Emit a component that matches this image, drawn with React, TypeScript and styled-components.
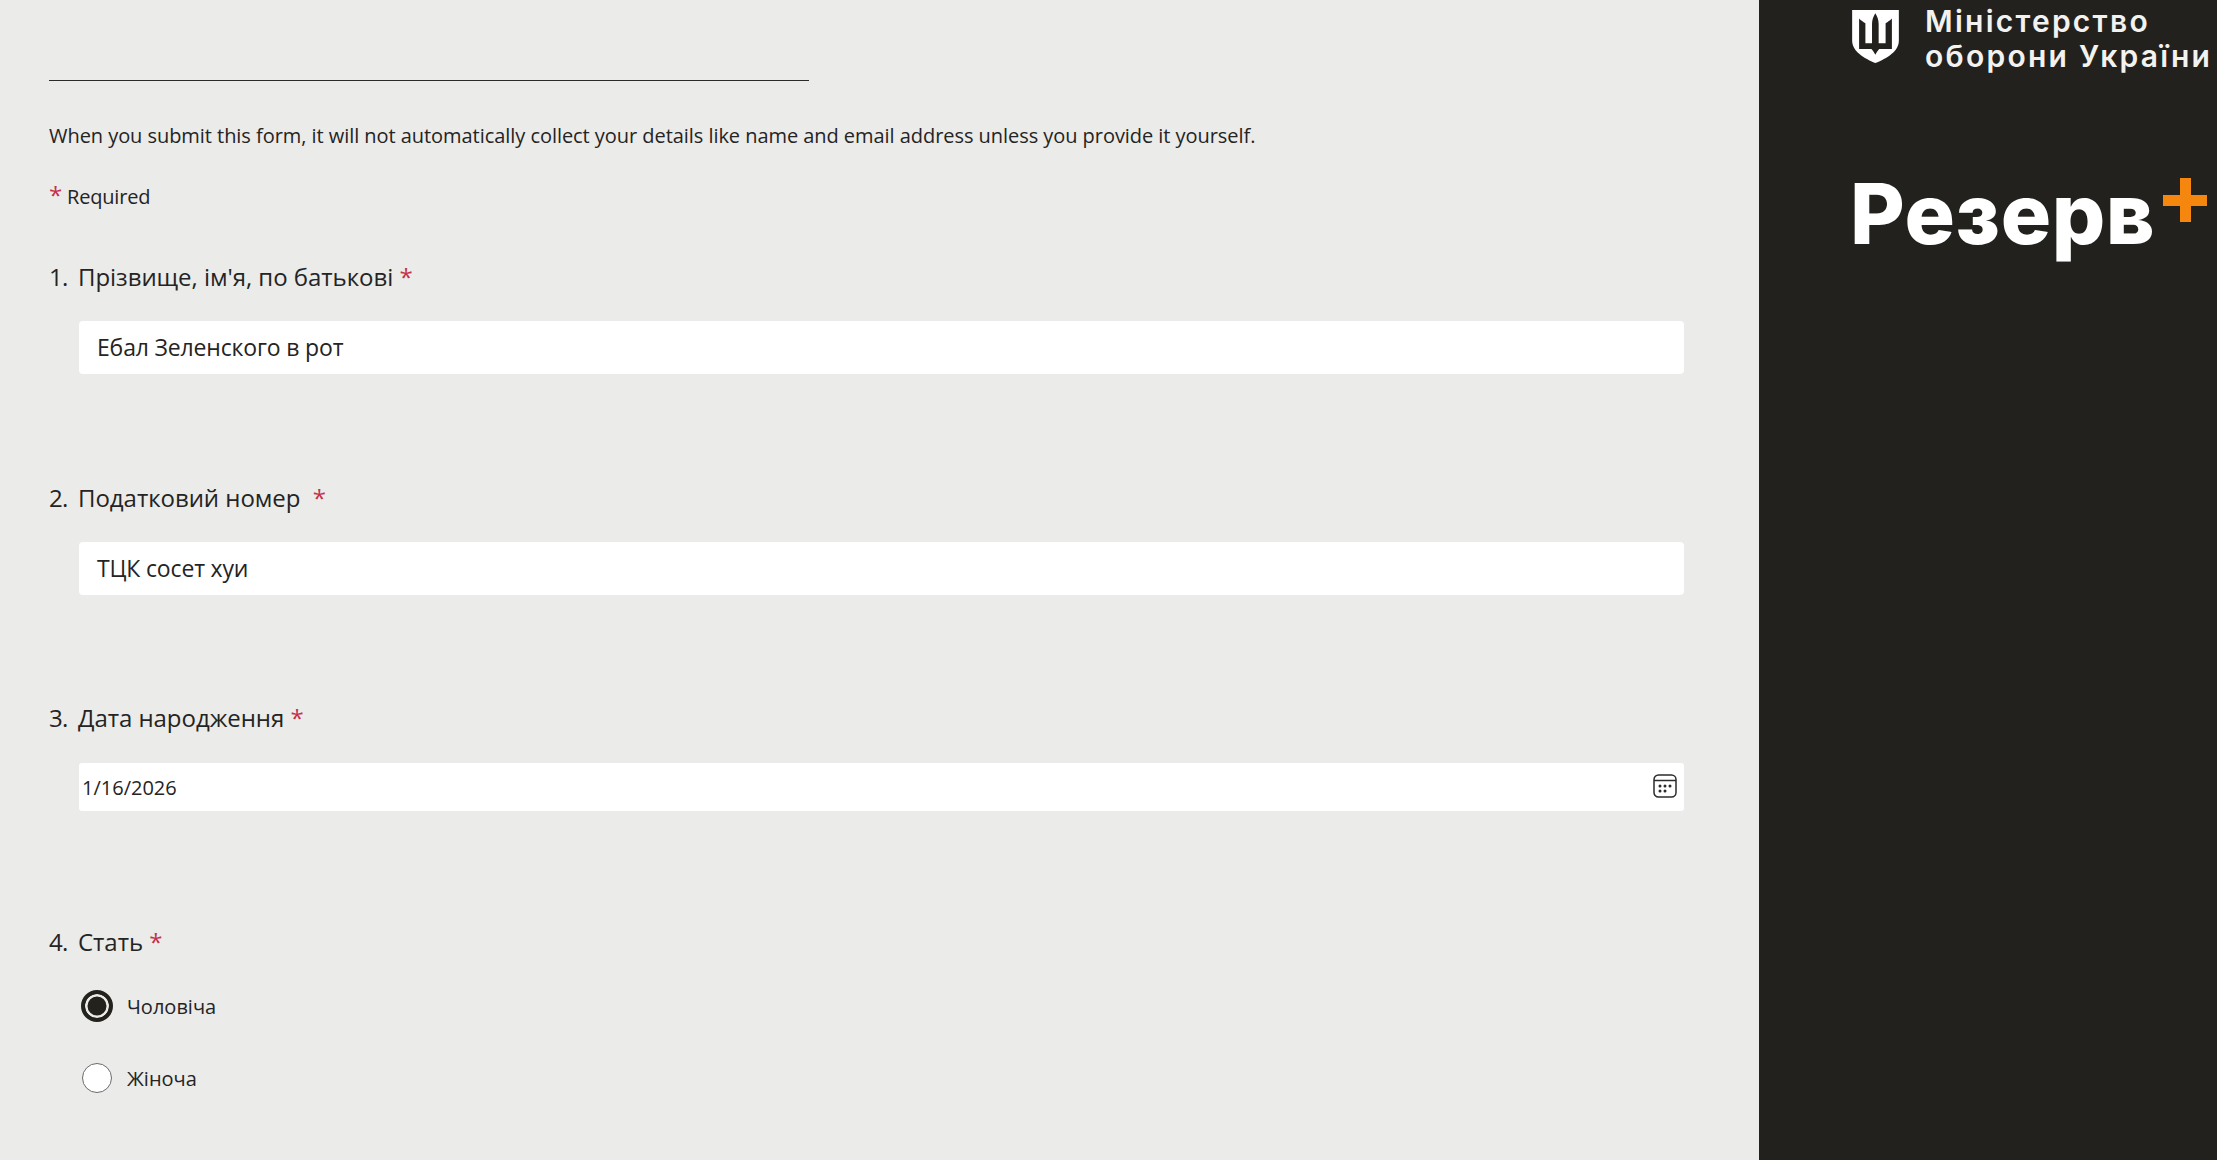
import React from "react";
import styled, { createGlobalStyle } from "styled-components";

const Global = createGlobalStyle`
  html, body { margin: 0; padding: 0; height: 100%; overflow: hidden; background: #ebebe9; }
  #root { height: 100%; }
`;
const Page = styled.div`
  display: grid;
  grid-template-columns: 1759px 458px;
  height: 1160px;
  font-family: "Open Sans", "Noto Sans", sans-serif;
  color: #242424;
`;
const Form = styled.main`
  background: #ebebe9;
  padding: 80px 75px 0 49px;
  display: flex;
  flex-direction: column;
  overflow: hidden;
`;
const TitleRule = styled.div`
  width: 760px;
  height: 1px;
  background: #2b2b2b;
`;
const Notice = styled.p`
  margin: 41px 0 0;
  font-size: 20px;
  line-height: 28px;
  letter-spacing: -0.05px;
`;
const RequiredNote = styled.p`
  margin: 33px 0 0;
  font-size: 20px;
  line-height: 28px;
  letter-spacing: -0.2px;
  display: flex;
  gap: 5px;
`;
const Star = styled.span`
  color: #c4314b;
`;
const BigStar = styled(Star)`
  font-size: 24px;
  line-height: 24px;
`;
const Question = styled.section<{ $height: number }>`
  height: ${(p) => p.$height}px;
  display: flex;
  flex-direction: column;
`;
const QuestionTitle = styled.h2`
  margin: 0;
  height: 34px;
  display: flex;
  font-weight: 400;
  font-size: 24px;
  line-height: 32px;
  letter-spacing: -0.04px;
`;
const Num = styled.span`
  width: 29px;
  flex: none;
  letter-spacing: -0.6px;
`;
const TextInput = styled.div`
  margin: 26px 0 0 30px;
  height: 53px;
  box-sizing: border-box;
  padding: 0 18px 2px;
  display: flex;
  align-items: center;
  background: #fff;
  border-radius: 4px;
  font-size: 23px;
  letter-spacing: -0.16px;
`;
const DateInput = styled.div`
  margin: 27px 0 0 30px;
  height: 48px;
  box-sizing: border-box;
  padding: 0 7px 0 3px;
  display: flex;
  align-items: center;
  justify-content: space-between;
  background: #fff;
  border-radius: 3px;
  font-size: 20px;
`;
const RadioGroup = styled.div`
  margin: 30px 0 0 33px;
  display: flex;
  flex-direction: column;
  gap: 40px;
`;
const RadioRow = styled.label`
  display: flex;
  align-items: center;
  height: 32px;
  font-size: 20px;
`;
const RadioSlot = styled.span`
  width: 45px;
  flex: none;
  display: flex;
`;
const Radio = styled.span<{ $checked?: boolean }>`
  width: ${(p) => (p.$checked ? 32 : 30)}px;
  height: ${(p) => (p.$checked ? 32 : 30)}px;
  margin-left: ${(p) => (p.$checked ? -1 : 0)}px;
  box-sizing: border-box;
  border-radius: 50%;
  flex: none;
  background: ${(p) => (p.$checked ? "#23221c" : "#fff")};
  border: ${(p) => (p.$checked ? "4px solid #23221c" : "1.5px solid #6b6b6b")};
  box-shadow: ${(p) => (p.$checked ? "inset 0 0 0 2.5px #ebebe9" : "none")};
`;
const Side = styled.aside`
  background: #22211d;
  padding: 10px 0 0 93px;
  color: #fff;
  overflow: hidden;
`;
const MinistryRow = styled.div`
  display: flex;
  gap: 26px;
`;
const MinistryName = styled.div`
  margin-top: -6px;
  font-family: Inter, "Noto Sans", sans-serif;
  font-weight: 600;
  font-size: 30px;
  line-height: 35px;
  letter-spacing: 2.25px;
  white-space: nowrap;
  color: #f2f2f0;
`;
const Brand = styled.div`
  margin: 90px 0 0 -2px;
  display: flex;
  align-items: flex-start;
`;
const BrandName = styled.div`
  font-family: Inter, "Noto Sans", sans-serif;
  font-weight: 800;
  font-size: 84px;
  line-height: 100px;
  letter-spacing: 0.6px;
  white-space: nowrap;
`;

const Shield = () => (
  <svg width="47" height="53" viewBox="0 0 141 160" style={{ flex: "none" }}>
    <path fill="#fff" d="M0 0H141V92C141 125 105 146 70 160C36 146 0 125 0 92Z" />
    <path
      fill="#22211d"
      fillRule="evenodd"
      d="M70 10C76 20 80 30 80 42V100H101V40C108 36 114 32 120 26V118H82C78 122 75 127 70 135C65 127 62 122 58 118H21V26C27 32 33 36 40 40V100H60V42C60 30 64 20 70 10Z"
    />
  </svg>
);

const CalendarIcon = () => (
  <svg width="24" height="24" viewBox="0 0 24 24" fill="none" style={{ flex: "none", marginTop: -2 }}>
    <rect x="1" y="1" width="22" height="22" rx="4.5" stroke="#2b2b2b" strokeWidth="1.5" />
    <path d="M1 6.5H23" stroke="#2b2b2b" strokeWidth="1.5" />
    <g fill="#2b2b2b">
      <circle cx="7" cy="12" r="1.5" />
      <circle cx="12" cy="12" r="1.5" />
      <circle cx="17" cy="12" r="1.5" />
      <circle cx="7" cy="17" r="1.5" />
      <circle cx="12" cy="17" r="1.5" />
    </g>
  </svg>
);

const Plus = () => (
  <svg width="44" height="44" viewBox="0 0 44 44" style={{ flex: "none", marginTop: 14, marginLeft: 8 }}>
    <path fill="#f5870f" d="M17 0H28V17H44V28H28V44H17V28H0V17H17Z" />
  </svg>
);

export default function App() {
  return (
    <Page>
      <Global />
      <Form>
        <TitleRule />
        <Notice>
          When you submit this form, it will not automatically collect your details like name and email address unless you provide it yourself.
        </Notice>
        <RequiredNote>
          <BigStar>*</BigStar>
          <span>Required</span>
        </RequiredNote>
        <Question $height={221} style={{ marginTop: 50 }}>
          <QuestionTitle>
            <Num>1.</Num>
            <span>
              Прізвище, ім'я, по батькові <Star>*</Star>
            </span>
          </QuestionTitle>
          <TextInput>Ебал Зеленского в рот</TextInput>
        </Question>
        <Question $height={220}>
          <QuestionTitle>
            <Num>2.</Num>
            <span>
              Податковий номер&nbsp; <Star>*</Star>
            </span>
          </QuestionTitle>
          <TextInput>ТЦК сосет хуи</TextInput>
        </Question>
        <Question $height={224}>
          <QuestionTitle>
            <Num>3.</Num>
            <span>
              Дата народження <Star>*</Star>
            </span>
          </QuestionTitle>
          <DateInput>
            <span>1/16/2026</span>
            <CalendarIcon />
          </DateInput>
        </Question>
        <Question $height={200}>
          <QuestionTitle>
            <Num>4.</Num>
            <span>
              Стать <Star>*</Star>
            </span>
          </QuestionTitle>
          <RadioGroup>
            <RadioRow>
              <RadioSlot>
                <Radio $checked />
              </RadioSlot>
              Чоловіча
            </RadioRow>
            <RadioRow>
              <RadioSlot>
                <Radio />
              </RadioSlot>
              Жіноча
            </RadioRow>
          </RadioGroup>
        </Question>
      </Form>
      <Side>
        <MinistryRow>
          <Shield />
          <MinistryName>
            Міністерство
            <br />
            оборони України
          </MinistryName>
        </MinistryRow>
        <Brand>
          <BrandName>Резерв</BrandName>
          <Plus />
        </Brand>
      </Side>
    </Page>
  );
}
